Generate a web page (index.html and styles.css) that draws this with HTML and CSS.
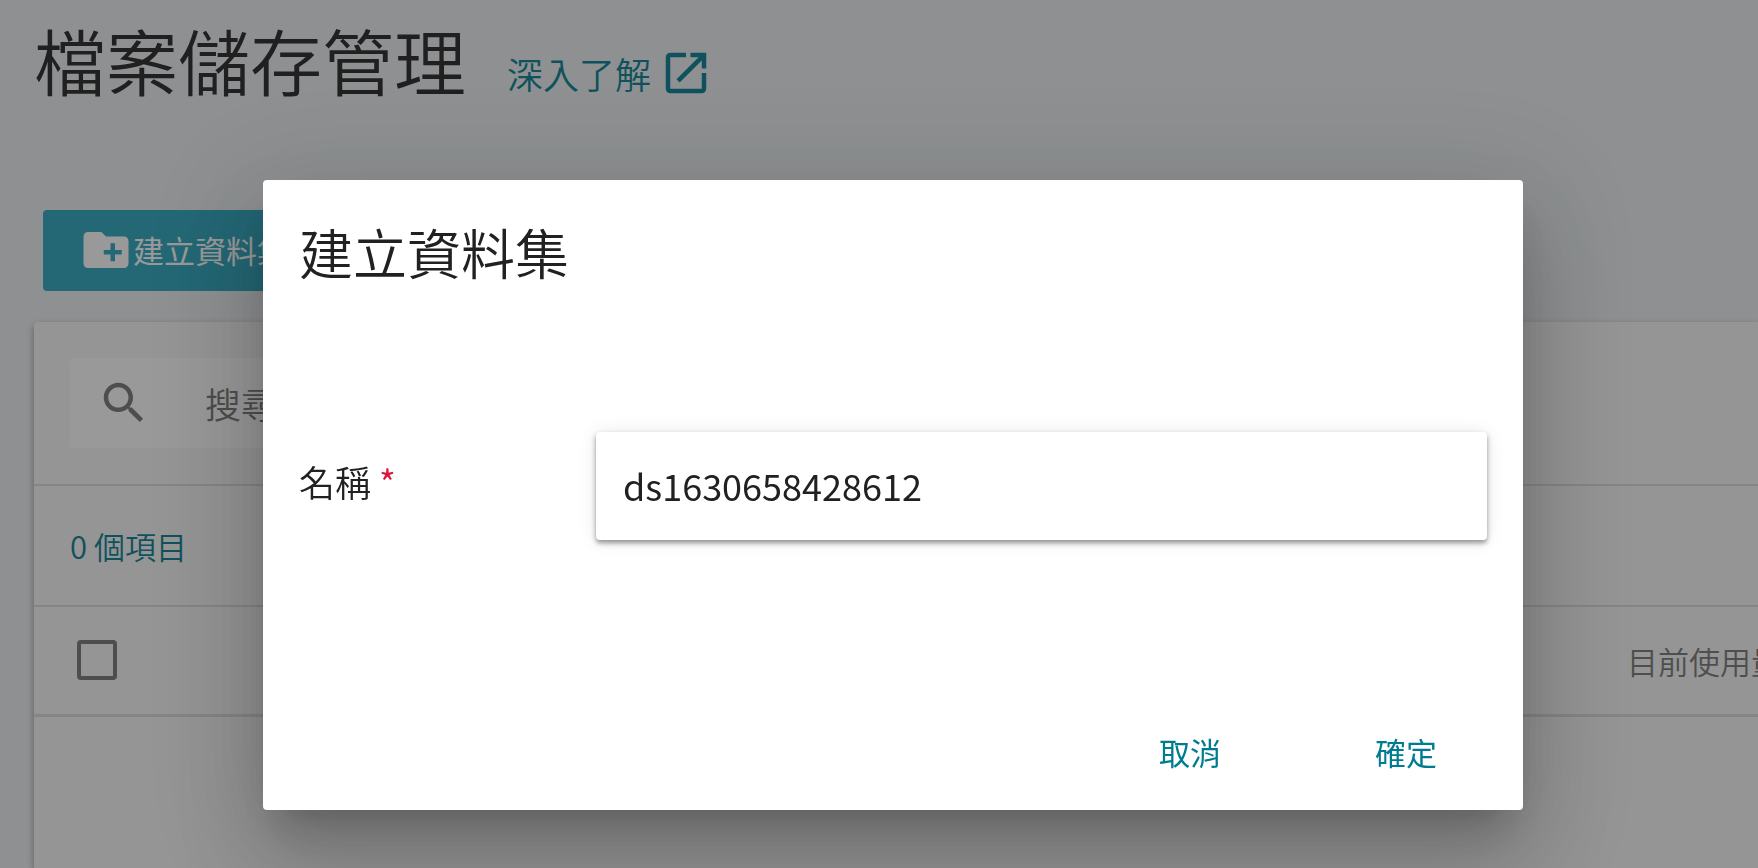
FILE: index.html
```html
<!DOCTYPE html>
<html lang="zh-Hant">
<head>
    <meta charset="UTF-8">
    <meta name="viewport" content="width=device-width, initial-scale=1.0">
    <title>檔案儲存管理</title>
    <link rel="stylesheet" href="styles.css">
</head>
<body>
    <header class="page-header">
        <h1>檔案儲存管理</h1>
        <a href="#" class="learn-more">
            深入了解
            <svg class="icon" viewBox="0 0 24 24"><path d="M19 19H5V5h7V3H5c-1.11 0-2 .9-2 2v14c0 1.100.89 2 2 2h14c1.100 0 2-.9 2-2v-7h-2v7zM14 3v2h3.590l-9.830 9.830 1.410 1.410L19 6.410V10h2V3h-7z"/></svg>
        </a>
    </header>

    <main>
        <button type="button" class="create-btn">
            <svg class="icon" viewBox="0 0 24 24"><path d="M20 6h-8l-2-2H4c-1.110 0-1.990.89-1.990 2L2 18c0 1.110.89 2 2 2h16c1.110 0 2-.89 2-2V8c0-1.110-.89-2-2-2zm-1 8h-3v3h-2v-3h-3v-2h3V9h2v3h3v2z"/></svg>建立資料集
        </button>

        <section class="card">
            <div class="search-row">
                <label class="search-box">
                    <svg class="icon" viewBox="0 0 24 24"><path d="M15.500 14h-.79l-.28-.27C15.410 12.590 16 11.110 16 9.500 16 5.910 13.090 3 9.500 3S3 5.910 3 9.500 5.910 16 9.500 16c1.610 0 3.090-.59 4.230-1.570l.27.28v.79l5 4.990L20.490 19l-4.990-5zm-6 0C7.010 14 5 11.990 5 9.500S7.010 5 9.500 5 14 7.010 14 9.500 11.990 14 9.500 14z"/></svg>
                    <input type="search" placeholder="搜尋" aria-label="搜尋">
                </label>
            </div>
            <div class="item-count">0 個項目</div>
            <table class="data-table">
                <thead>
                    <tr>
                        <th class="select-col"><input type="checkbox" aria-label="全選"></th>
                        <th></th>
                        <th class="usage-col">目前使用量</th>
                    </tr>
                </thead>
            </table>
        </section>
    </main>

    <div class="overlay">
        <form class="dialog" role="dialog" aria-modal="true" aria-labelledby="dialog-title">
            <h2 id="dialog-title">建立資料集</h2>
            <div class="form-group">
                <label for="name">名稱 <span class="required">*</span></label>
                <input type="text" id="name" name="name" value="ds1630658428612" required>
            </div>
            <div class="dialog-actions">
                <button type="button">取消</button>
                <button type="submit">確定</button>
            </div>
        </form>
    </div>
</body>
</html>
```
FILE: styles.css
```css
* {
    margin: 0;
    padding: 0;
    box-sizing: border-box;
}

body {
    background: #ebeff2;
    color: #212121;
    font-family: 'Noto Sans CJK TC', sans-serif;
    font-size: 31px;
    font-weight: 350;
    min-height: 100vh;
    display: flex;
    flex-direction: column;
    overflow: hidden;
}

input,
button {
    font-family: inherit;
    font-weight: inherit;
    border: none;
    outline: none;
}

.icon {
    width: 54px;
    height: 54px;
    fill: currentColor;
    flex-shrink: 0;
}

.page-header {
    display: flex;
    align-items: center;
    gap: 41px;
    padding: 11px 34px 0;
    white-space: nowrap;
}

h1 {
    font-size: 72px;
    font-weight: inherit;
    line-height: 96px;
}

.learn-more {
    display: flex;
    align-items: center;
    gap: 8px;
    padding-top: 28px;
    font-size: 36px;
    line-height: 56px;
    color: #007c91;
    text-decoration: none;
}

main {
    flex: 1;
    display: flex;
    flex-direction: column;
    align-items: flex-start;
    padding: 103px 0 0 34px;
}

.create-btn {
    display: flex;
    align-items: center;
    height: 81px;
    margin: 0 0 31px 9px;
    padding: 0 36px 2px;
    border-radius: 4px;
    background: #28a4be;
    color: #fff;
    font-size: 31px;
    font-weight: 400;
}

.card {
    flex: 1;
    width: 100%;
    background: #f7f7f7;
    border-radius: 4px 0 0 0;
    box-shadow: 0 3px 7px rgba(0, 0, 0, 0.4);
}

.search-row {
    padding: 36px;
    border-bottom: 2px solid #dadada;
}

.search-box {
    display: flex;
    align-items: center;
    width: 50%;
    height: 90px;
    padding: 0 27px;
    gap: 54px;
    border-radius: 4px;
    background: #fff;
    color: #757575;
}

.search-box input {
    flex: 1;
    min-width: 0;
    background: transparent;
    font-size: 36px;
}

.search-box input::placeholder {
    color: #757575;
}

.item-count {
    padding: 0 36px;
    border-bottom: 2px solid #dadada;
    line-height: 119px;
    color: #007c91;
}

.data-table {
    width: 100%;
    table-layout: fixed;
    border-collapse: collapse;
}

.data-table th {
    height: 108px;
    border-bottom: 3px solid #dadada;
    color: #757575;
    font-weight: inherit;
    text-align: left;
    white-space: nowrap;
}

.select-col {
    width: 144px;
    padding-left: 43px;
}

.usage-col {
    width: 131px;
}

.data-table input {
    appearance: none;
    display: block;
    width: 40px;
    height: 40px;
    border: 4px solid #757575;
    border-radius: 4px;
}

.overlay {
    position: fixed;
    inset: 0;
    display: flex;
    justify-content: center;
    align-items: flex-start;
    padding: 180px 0 0 28px;
    background: rgba(33, 33, 33, 0.46);
}

.dialog {
    width: 73%;
    max-width: 1260px;
    padding: 36px 36px 18px;
    border-radius: 4px;
    background: #fff;
    box-shadow: 0 25px 34px -16px rgba(0, 0, 0, 0.2),
        0 54px 86px 7px rgba(0, 0, 0, 0.14),
        0 20px 104px 18px rgba(0, 0, 0, 0.12);
}

.dialog h2 {
    font-size: 54px;
    font-weight: inherit;
    line-height: 72px;
}

.form-group {
    display: flex;
    align-items: center;
    padding: 144px 0 171px;
    font-size: 36px;
}

.form-group label {
    width: 25%;
    padding-bottom: 10px;
}

.required {
    color: #dc143c;
    font-weight: 400;
}

.form-group input {
    flex: 1;
    min-width: 0;
    height: 108px;
    padding: 0 27px 2px;
    border-radius: 4px;
    background: #fff;
    color: #212121;
    font-size: 36px;
    font-weight: 400;
    box-shadow: 0 3px 5px rgba(0, 0, 0, 0.4), 0 1px 18px rgba(0, 0, 0, 0.1);
}

.dialog-actions {
    display: flex;
    justify-content: flex-end;
    gap: 18px;
    margin-right: -18px;
}

.dialog-actions button {
    width: 198px;
    height: 81px;
    background: transparent;
    color: #007c91;
    font-size: 31px;
    font-weight: 400;
    cursor: pointer;
}
```
